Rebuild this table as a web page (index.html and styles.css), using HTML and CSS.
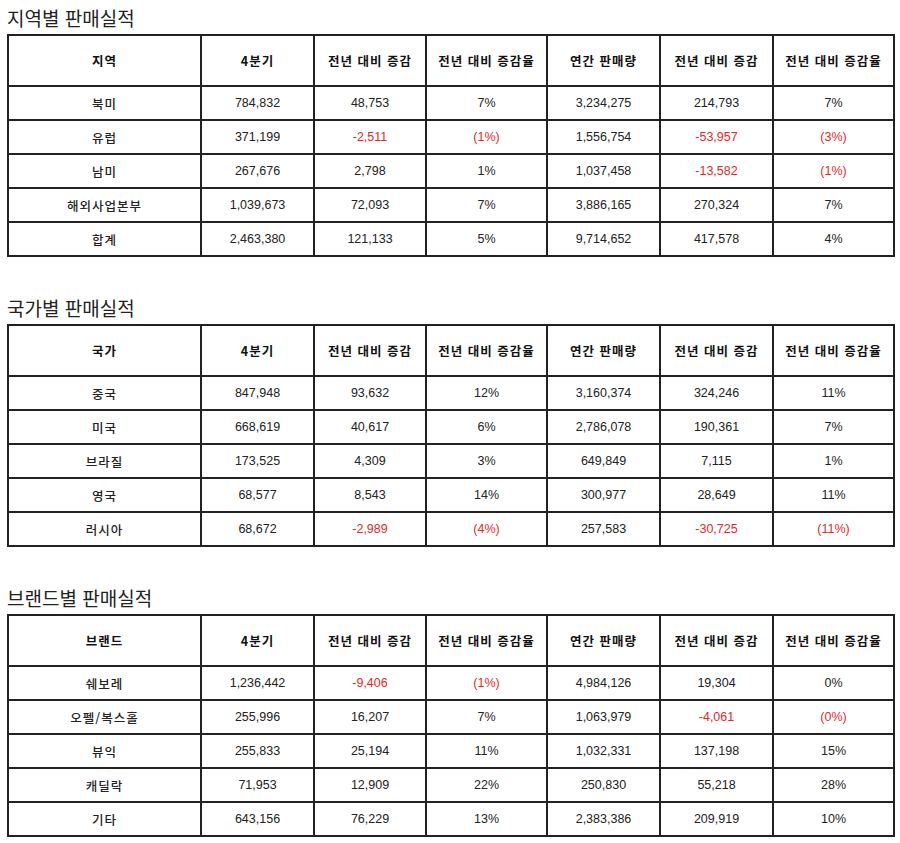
FILE: index.html
```html
<!DOCTYPE html>
<html lang="ko">
<head>
<meta charset="utf-8">
<title>판매실적</title>
<link rel="stylesheet" href="styles.css">
</head>
<body>
<section class="block">
  <h2 class="title">지역별 판매실적</h2>
  <table class="sales">
    <colgroup><col class="c1"><col class="c2"><col class="c3"><col class="c4"><col class="c5"><col class="c6"><col class="c7"></colgroup>
    <thead>
      <tr><th>지역</th><th>4분기</th><th>전년 대비 증감</th><th>전년 대비 증감율</th><th>연간 판매량</th><th>전년 대비 증감</th><th>전년 대비 증감율</th></tr>
    </thead>
    <tbody>
      <tr><td class="name">북미</td><td>784,832</td><td>48,753</td><td>7%</td><td>3,234,275</td><td>214,793</td><td>7%</td></tr>
      <tr><td class="name">유럽</td><td>371,199</td><td class="neg">-2,511</td><td class="neg">(1%)</td><td>1,556,754</td><td class="neg">-53,957</td><td class="neg">(3%)</td></tr>
      <tr><td class="name">남미</td><td>267,676</td><td>2,798</td><td>1%</td><td>1,037,458</td><td class="neg">-13,582</td><td class="neg">(1%)</td></tr>
      <tr><td class="name">해외사업본부</td><td>1,039,673</td><td>72,093</td><td>7%</td><td>3,886,165</td><td>270,324</td><td>7%</td></tr>
      <tr><td class="name">합계</td><td>2,463,380</td><td>121,133</td><td>5%</td><td>9,714,652</td><td>417,578</td><td>4%</td></tr>
    </tbody>
  </table>
</section>

<section class="block">
  <h2 class="title">국가별 판매실적</h2>
  <table class="sales">
    <colgroup><col class="c1"><col class="c2"><col class="c3"><col class="c4"><col class="c5"><col class="c6"><col class="c7"></colgroup>
    <thead>
      <tr><th>국가</th><th>4분기</th><th>전년 대비 증감</th><th>전년 대비 증감율</th><th>연간 판매량</th><th>전년 대비 증감</th><th>전년 대비 증감율</th></tr>
    </thead>
    <tbody>
      <tr><td class="name">중국</td><td>847,948</td><td>93,632</td><td>12%</td><td>3,160,374</td><td>324,246</td><td>11%</td></tr>
      <tr><td class="name">미국</td><td>668,619</td><td>40,617</td><td>6%</td><td>2,786,078</td><td>190,361</td><td>7%</td></tr>
      <tr><td class="name">브라질</td><td>173,525</td><td>4,309</td><td>3%</td><td>649,849</td><td>7,115</td><td>1%</td></tr>
      <tr><td class="name">영국</td><td>68,577</td><td>8,543</td><td>14%</td><td>300,977</td><td>28,649</td><td>11%</td></tr>
      <tr><td class="name">러시아</td><td>68,672</td><td class="neg">-2,989</td><td class="neg">(4%)</td><td>257,583</td><td class="neg">-30,725</td><td class="neg">(11%)</td></tr>
    </tbody>
  </table>
</section>

<section class="block">
  <h2 class="title">브랜드별 판매실적</h2>
  <table class="sales">
    <colgroup><col class="c1"><col class="c2"><col class="c3"><col class="c4"><col class="c5"><col class="c6"><col class="c7"></colgroup>
    <thead>
      <tr><th>브랜드</th><th>4분기</th><th>전년 대비 증감</th><th>전년 대비 증감율</th><th>연간 판매량</th><th>전년 대비 증감</th><th>전년 대비 증감율</th></tr>
    </thead>
    <tbody>
      <tr><td class="name">쉐보레</td><td>1,236,442</td><td class="neg">-9,406</td><td class="neg">(1%)</td><td>4,984,126</td><td>19,304</td><td>0%</td></tr>
      <tr><td class="name">오펠/복스홀</td><td>255,996</td><td>16,207</td><td>7%</td><td>1,063,979</td><td class="neg">-4,061</td><td class="neg">(0%)</td></tr>
      <tr><td class="name">뷰익</td><td>255,833</td><td>25,194</td><td>11%</td><td>1,032,331</td><td>137,198</td><td>15%</td></tr>
      <tr><td class="name">캐딜락</td><td>71,953</td><td>12,909</td><td>22%</td><td>250,830</td><td>55,218</td><td>28%</td></tr>
      <tr><td class="name">기타</td><td>643,156</td><td>76,229</td><td>13%</td><td>2,383,386</td><td>209,919</td><td>10%</td></tr>
    </tbody>
  </table>
</section>
</body>
</html>
```

FILE: styles.css
```css
html, body {
  margin: 0;
  padding: 0;
  background: #ffffff;
}

body {
  padding: 6px 7px 0 7px;
  font-family: "Liberation Sans", "Noto Sans CJK KR", sans-serif;
  color: #222222;
}

.block {
  margin: 0 0 39px 0;
}

.title {
  margin: 0 0 4px 0;
  font-family: "Noto Sans CJK KR", sans-serif;
  font-size: 19px;
  font-weight: 400;
  line-height: 24px;
  color: #222222;
}

.sales {
  width: 886px;
  table-layout: fixed;
  border-collapse: collapse;
  border: 2px solid #222222;
}

.c1 { width: 193px; }
.c2 { width: 113px; }
.c3 { width: 112px; }
.c4 { width: 121px; }
.c5 { width: 113px; }
.c6 { width: 113px; }
.c7 { width: 121px; }

.sales th,
.sales td {
  border: 2px solid #222222;
  padding: 0;
  text-align: center;
  vertical-align: middle;
  white-space: nowrap;
}

.sales thead tr {
  height: 51px;
}

.sales tbody tr {
  height: 34px;
}

.sales th {
  font-family: "Noto Sans CJK KR", sans-serif;
  font-size: 12.5px;
  font-weight: 700;
  letter-spacing: 1px;
  color: #111111;
}

.sales td {
  font-size: 12.5px;
  color: #222222;
}

.sales td.name {
  font-family: "Noto Sans CJK KR", sans-serif;
  letter-spacing: 1px;
  font-weight: 500;
}

.sales td.neg {
  color: #e62828;
}
```
